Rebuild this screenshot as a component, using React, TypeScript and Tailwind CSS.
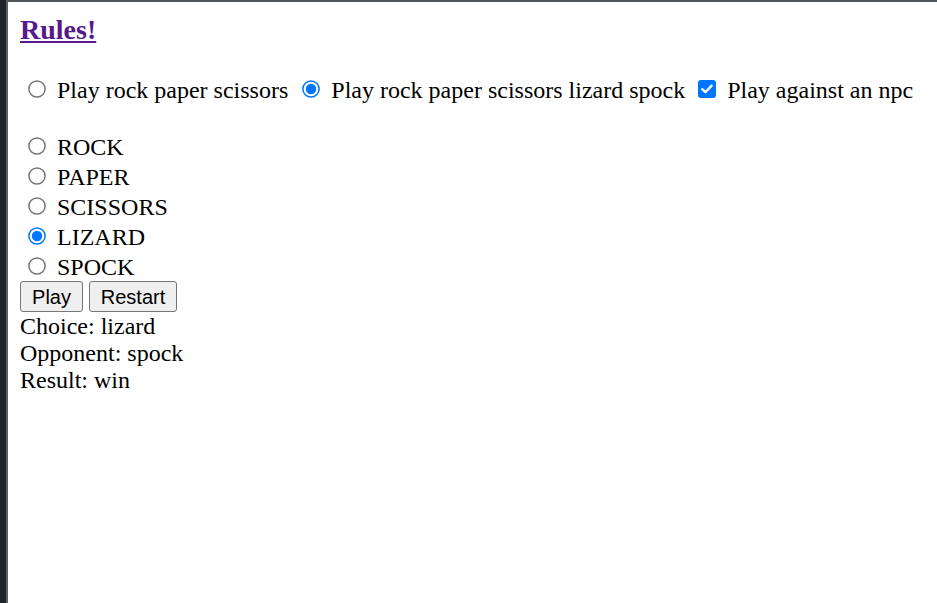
import React from "react";

const MOVES = ["ROCK", "PAPER", "SCISSORS", "LIZARD", "SPOCK"];

function Radio({ checked }: { checked?: boolean }) {
  return (
    <svg width="18" height="18" viewBox="0 0 18 18" className="shrink-0">
      <circle
        cx="9"
        cy="9"
        r="8.1"
        fill="white"
        stroke={checked ? "#0075ff" : "#767676"}
        strokeWidth="1.5"
      />
      {checked && <circle cx="9" cy="9" r="5.2" fill="#0075ff" />}
    </svg>
  );
}

function Checkbox() {
  return (
    <div className="flex h-[18px] w-[18px] shrink-0 items-center justify-center rounded-[3px] bg-[#0075ff]">
      <svg width="18" height="18" viewBox="0 0 18 18">
        <path d="M4.2 9.2 L7.4 12.2 L13.6 5.6" fill="none" stroke="white" strokeWidth="2.4" strokeLinecap="round" strokeLinejoin="round" />
      </svg>
    </div>
  );
}

export default function App() {
  return (
    <div className="flex h-[603px] w-[937px] overflow-hidden bg-white text-black font-['Liberation_Serif',serif]">
      <div className="w-[6px] bg-[#202428]" />
      <div className="w-[2px] bg-[#5b6065]" />
      <div className="flex-1 border-t-2 border-[#50555a] pl-[12px]">
        <h3 className="mt-[12px] text-[28px] font-bold leading-[32px]">
          <a href="#" className="text-[#551a8b] underline">Rules!</a>
        </h3>

        <div className="mt-[28px] flex h-[30px] items-center text-[24px] leading-[30px]">
          <span className="ml-[8px] mt-[-1px]"><Radio /></span>
          <span className="ml-[11px] mt-[2px]">Play rock paper scissors</span>
          <span className="ml-[14px] mt-[-1px]"><Radio checked /></span>
          <span className="ml-[11px] mt-[2px]">Play rock paper scissors lizard spock</span>
          <span className="ml-[13px] mt-[-1px]"><Checkbox /></span>
          <span className="ml-[11px] mt-[2px]">Play against an npc</span>
        </div>

        <div className="mt-[28px] flex flex-col text-[24px] leading-[30px]">
          {MOVES.map((m) => (
            <div key={m} className="flex h-[30px] items-center">
              <span className="ml-[8px] mt-[-2px]"><Radio checked={m === "LIZARD"} /></span>
              <span className="ml-[11px] mt-[-1px]">{m}</span>
            </div>
          ))}
        </div>

        <div className="mt-[-1px] flex gap-[6px] font-['Liberation_Sans',Arial,sans-serif] text-[20px]">
          <button className="h-[31px] w-[63px] rounded-[3px] border-[1.5px] border-[#767676] bg-[#efefef] leading-none">
            Play
          </button>
          <button className="h-[31px] w-[88px] rounded-[3px] border-[1.5px] border-[#767676] bg-[#efefef] leading-none">
            Restart
          </button>
        </div>

        <div className="mt-[1px] text-[24px] leading-[27px]">
          <div>Choice: lizard</div>
          <div>Opponent: spock</div>
          <div>Result: win</div>
        </div>
      </div>
    </div>
  );
}
